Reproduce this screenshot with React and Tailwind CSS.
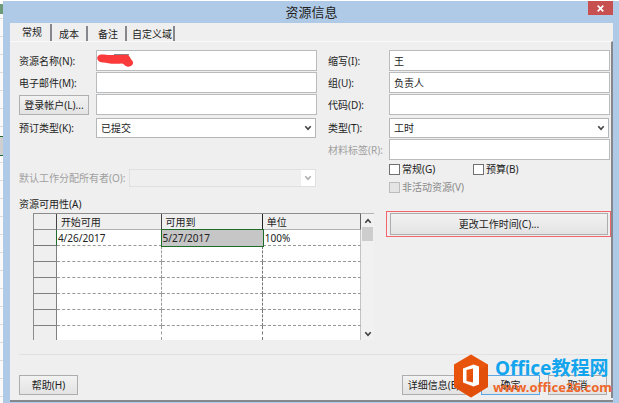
import { useState } from 'react';

const TABS = [
    { name: '常规', style: 'pl-3 pr-2' },
    { name: '成本', style: 'px-[7px]' },
    { name: '备注', style: 'pl-[10px] pr-[7px]' },
    { name: '自定义域', style: 'pl-[5px] pr-px' },
];

const ROWS = [
    { from: '4/26/2017', to: '5/27/2017', units: '100%' },
    {}, {}, {}, {}, {}, {},
];

const Chevron = ({ className = '', up = false }) => (
    <svg className={className} width="8" height="6" viewBox="0 0 8 6" fill="none" stroke="currentColor" strokeWidth="1.7">
        <path d={up ? 'M1.3 4.8 L4 1.8 L6.7 4.8' : 'M1.3 1.2 L4 4.2 L6.7 1.2'} />
    </svg>
);

const Label = ({ htmlFor, disabled, children }) => (
    <label htmlFor={htmlFor} className={`shrink-0 whitespace-nowrap ${disabled ? 'text-[#a0a0a0]' : ''}`}>
        {children}
    </label>
);

const TextBox = ({ id, value = '', ...rest }) => (
    <input
        id={id}
        type="text"
        defaultValue={value}
        className="h-[21px] w-full min-w-0 border border-[#b9bbbd] bg-white px-1 outline-none"
        {...rest}
    />
);

const Combo = ({ id, value, disabled }) => (
    <div className={`relative w-full pr-px ${disabled ? 'text-[#b0b0b0]' : 'text-[#222]'}`}>
        <select
            id={id}
            disabled={disabled}
            className="block h-5 w-full appearance-none border border-[#b4b6b8] bg-white px-1 outline-none disabled:h-[18px] disabled:border-[#e0e0e0] disabled:bg-[#efefef] disabled:opacity-100"
        >
            <option>{value}</option>
        </select>
        <span className={`pointer-events-none absolute inset-y-px right-0.5 flex w-[14px] items-center justify-center ${disabled ? 'bg-white' : 'text-[#444]'}`}>
            <Chevron />
        </span>
    </div>
);

const Button = ({ className = '', children }) => (
    <button
        type="button"
        className={`h-5 whitespace-nowrap border bg-linear-to-b from-[#f2f2f2] to-[#e3e3e3] text-center ${className}`}
    >
        {children}
    </button>
);

const CheckBox = ({ id, disabled, children }) => (
    <div className="flex items-center gap-0.5">
        <input
            id={id}
            type="checkbox"
            disabled={disabled}
            className="size-[11px] appearance-none border border-[#707070] bg-white disabled:border-[#bcbcbc] disabled:bg-[#e4e4e4]"
        />
        <label htmlFor={id} className={disabled ? 'text-[#8a8a8a]' : ''}>{children}</label>
    </div>
);

const FieldRow = ({ children }) => (
    <div className="grid grid-cols-[77px_1fr] items-center">{children}</div>
);

const RightRow = ({ children }) => (
    <div className="grid grid-cols-[61px_1fr] items-center">{children}</div>
);

const AvailabilityTable = () => (
    <div className="ml-[14px] flex">
        <table className="min-w-0 flex-1 table-fixed border-separate border-spacing-0 border-l border-t border-[#8c8c8c] bg-white">
            <colgroup>
                <col className="w-[7%]" />
                <col className="w-[32%]" />
                <col className="w-[31%]" />
                <col className="w-[30%]" />
            </colgroup>
            <thead>
                <tr className="h-4 bg-[#efefef] text-left">
                    <th className="border-b border-r border-b-[#8c8c8c] border-r-[#444] p-0" />
                    <th className="border-b border-r border-b-[#b0b0b0] border-r-[#444] p-0 pl-1 font-normal">开始可用</th>
                    <th className="border-b border-r border-b-[#b0b0b0] border-r-[#222] p-0 pl-1 font-normal">可用到</th>
                    <th className="border-b border-r border-b-[#b0b0b0] border-r-[#666] p-0 pl-1 font-normal">单位</th>
                </tr>
            </thead>
            <tbody>
                {ROWS.map((row, i) => {
                    const last = i === ROWS.length - 1;
                    return (
                        <tr key={i} className={last ? 'h-[14px]' : 'h-4'}>
                            <td className={`border-b border-r bg-[#efefef] p-0 ${i === 0 ? 'border-b-[#777] border-r-[#1f6b2a]' : 'border-[#808080]'} ${last ? 'border-b-0' : ''}`} />
                            <td className={`border-b border-r border-dashed border-[#999] p-0 pl-px ${last ? 'border-b-0' : ''}`}>{row.from}</td>
                            {row.to ? (
                                <td className="bg-[#c6c6c6] p-0 pl-px outline-1 outline-[#1f6b2a]">{row.to}</td>
                            ) : (
                                <td className={`border-b border-r border-dashed border-b-[#999] border-r-[#777] p-0 ${last ? 'border-b-0' : ''}`} />
                            )}
                            <td className={`border-b border-dashed border-b-[#999] p-0 pl-0.5 [border-right:1px_solid_#c4c4c4] ${last ? 'border-b-0' : ''}`}>{row.units}</td>
                        </tr>
                    );
                })}
            </tbody>
        </table>
        <div className="flex w-[13px] flex-col items-center border-t border-[#b4b4b4] bg-[#f1f1f1] text-[#444]">
            <div className="flex h-[13px] items-center"><Chevron up /></div>
            <div className="h-[14px] w-[11px] bg-[#cdcdcd]" />
            <div className="mt-auto flex h-[13px] items-center"><Chevron /></div>
        </div>
    </div>
);

const Watermark = () => (
    <div className="pointer-events-none absolute bottom-[5px] right-[7px] flex items-center gap-1">
        <svg width="36" height="44" viewBox="0 0 36 44">
            <path d="M18 0.5 L35 10.5 V33 L18 43.5 L1 33 V10.5 Z" fill="#e9540d" />
            <path d="M35 10.5 V33 L18 43.5 L1 33 Z" fill="#d94a08" opacity="0.45" />
            <path fillRule="evenodd" d="M10 14.5 L20.5 10.5 L26 12.5 V30.5 L20.5 32.5 L10 28.5 Z M13.5 16 V27 L20 28.5 V14.5 Z" fill="#fff" />
        </svg>
        <div className="whitespace-nowrap font-bold">
            <div className="pl-0.5 text-[19px] leading-[22px] text-[#12a5ee]">Office教程网</div>
            <div className="text-[13px] leading-4 text-[#f0672a]">www.office26.com</div>
        </div>
    </div>
);

const App = () => {
    const [tab, setTab] = useState('常规');

    return (
        <div className="relative flex min-h-screen bg-white pt-px text-[10px] leading-[14px] text-[#222] [font-family:'Noto_Sans','Noto_Sans_CJK_SC',sans-serif]">
            {/* Sheet showing behind the dialog */}
            <div className="w-[3px] shrink-0 bg-[repeating-linear-gradient(#fafafa_0_17px,#d9dce0_17px_18px)]">
                <div className="mt-[3px] h-[10px] w-[3px] bg-[#6f9a78]" />
                <div className="mt-[122px] h-5 border-y border-[#1f6b2a] bg-[#cfcfcf]" />
            </div>

            <div className="flex min-w-0 flex-1 flex-col bg-[#afcae6] pb-px pl-[7px] pr-[6px]">
                <header className="relative flex h-[22px] items-center justify-center">
                    <h1 className="text-[13px] leading-5">资源信息</h1>
                    <button type="button" aria-label="关闭" className="absolute right-0 top-0 flex h-[14px] w-[25px] items-center justify-center bg-[#c75050]">
                        <svg width="7" height="7" viewBox="0 0 7 7" stroke="#fff" strokeWidth="1.7">
                            <path d="M0.7 0.7 L6.3 6.3 M6.3 0.7 L0.7 6.3" />
                        </svg>
                    </button>
                </header>

                <main className="flex-1 border-b-2 border-[#85878c] bg-[#efefef]">
                    <nav className="flex h-[18px] items-end" role="tablist">
                        {TABS.map(({ name, style }) => (
                            <button
                                key={name}
                                type="button"
                                role="tab"
                                aria-selected={name === tab}
                                onClick={() => setTab(name)}
                                className={`border-r-2 border-[#85878c] ${style} ${name === tab ? 'h-[17px] pb-0.5' : 'h-[15px]'}`}
                            >
                                {name}
                            </button>
                        ))}
                    </nav>

                    <form className="border-r-2 border-t border-r-[#85878c] border-t-[#fafafa] pb-[3px] pl-[9px] pt-2" onSubmit={(e) => e.preventDefault()}>
                        <div className="grid grid-cols-[298fr_282fr] gap-[11px] pr-px">
                            <div className="flex flex-col gap-px">
                                <FieldRow>
                                    <Label htmlFor="name">资源名称(N):</Label>
                                    <div className="relative">
                                        <TextBox id="name" />
                                        <svg className="absolute left-px top-[3px]" width="37" height="15" viewBox="0 0 37 15">
                                            <path d="M17 1.8 H32" stroke="#555" strokeWidth="1" />
                                            <path d="M1 3 C3 0.5 8 2 13 2 C20 2.5 26 1 31 2 C33 3.5 33.5 6 35.5 8 C37.5 11 34 14.5 30 13.5 C28 13 27 11 25 10.5 C20 11 15 11 10 10 C6 9.5 2 9.5 0.8 7 C0 5.5 0 4.5 1 3 Z" fill="#fb3b3b" />
                                        </svg>
                                    </div>
                                </FieldRow>
                                <FieldRow>
                                    <Label htmlFor="mail">电子邮件(M):</Label>
                                    <TextBox id="mail" />
                                </FieldRow>
                                <FieldRow>
                                    <Button className="mr-[7px] border-[#b0b0b0]">登录帐户(L)...</Button>
                                    <TextBox id="account" aria-label="登录帐户" />
                                </FieldRow>
                                <div className="pt-0.5">
                                    <FieldRow>
                                        <Label htmlFor="booking">预订类型(K):</Label>
                                        <Combo id="booking" value="已提交" />
                                    </FieldRow>
                                </div>
                                <div className="flex items-center gap-[3px] pt-[30px]">
                                    <Label htmlFor="owner" disabled>默认工作分配所有者(O):</Label>
                                    <Combo id="owner" value="" disabled />
                                </div>
                            </div>

                            <div className="flex flex-col gap-px">
                                <RightRow>
                                    <Label htmlFor="initials">缩写(I):</Label>
                                    <TextBox id="initials" value="王" />
                                </RightRow>
                                <RightRow>
                                    <Label htmlFor="group">组(U):</Label>
                                    <TextBox id="group" value="负责人" />
                                </RightRow>
                                <RightRow>
                                    <Label htmlFor="code">代码(D):</Label>
                                    <TextBox id="code" />
                                </RightRow>
                                <div className="pt-0.5">
                                    <RightRow>
                                        <Label htmlFor="type">类型(T):</Label>
                                        <Combo id="type" value="工时" />
                                    </RightRow>
                                </div>
                                <RightRow>
                                    <Label htmlFor="material" disabled>材料标签(R):</Label>
                                    <TextBox id="material" />
                                </RightRow>
                                <div className="flex flex-col gap-1 pl-[61px] pt-px">
                                    <div className="grid grid-cols-[84px_1fr]">
                                        <CheckBox id="generic">常规(G)</CheckBox>
                                        <CheckBox id="budget">预算(B)</CheckBox>
                                    </div>
                                    <CheckBox id="inactive" disabled>非活动资源(V)</CheckBox>
                                </div>
                            </div>
                        </div>

                        <div className="grid grid-cols-[355fr_225fr] gap-3 pt-[3px]">
                            <div>
                                <div className="pb-0.5">资源可用性(A)</div>
                                <AvailabilityTable />
                            </div>
                            <div className="mt-[14px] flex self-start border border-[#f4646c] py-px pl-[3px] pr-[2px]">
                                <Button className="h-[22px] flex-1 border-[#adadad]">更改工作时间(C)...</Button>
                            </div>
                        </div>

                        <div className="mr-1 mt-[14px] flex gap-2 border-t border-[#e2e2e2] pt-5">
                            <Button className="mr-auto w-[59px] border-[#adadad]">帮助(H)</Button>
                            <Button className="w-[71px] border-[#adadad]">详细信息(E)...</Button>
                            <Button className="w-[59px] border-[#5ba7e6]">确定</Button>
                            <Button className="w-[59px] border-[#adadad]">取消</Button>
                        </div>
                    </form>
                </main>
            </div>

            <Watermark />
        </div>
    );
};

export default App;
